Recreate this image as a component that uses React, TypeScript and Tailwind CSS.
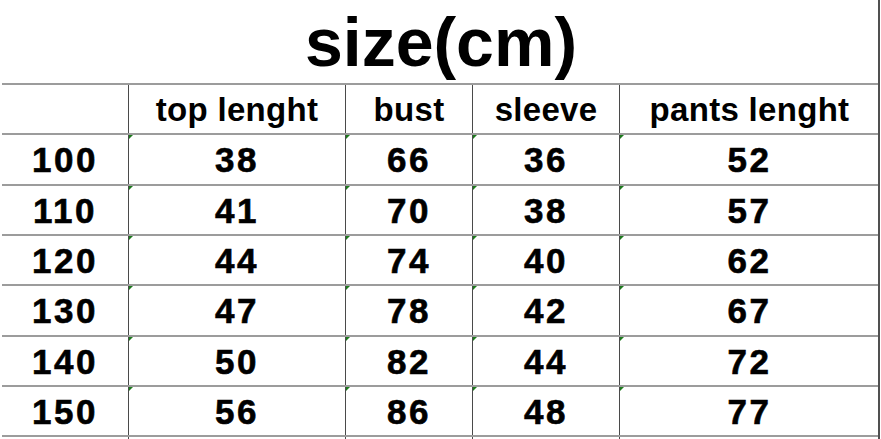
const headers = ["", "top lenght", "bust", "sleeve", "pants lenght"];

const rows = [
  ["100", "38", "66", "36", "52"],
  ["110", "41", "70", "38", "57"],
  ["120", "44", "74", "40", "62"],
  ["130", "47", "78", "42", "67"],
  ["140", "50", "82", "44", "72"],
  ["150", "56", "86", "48", "77"],
];

// row heights include the 2px top rule
const rowHeights = ["h-[51px]", "h-[50px]", "h-[50px]", "h-[51px]", "h-[50px]", "h-[50px]"];

const colWidths = ["w-[126px]", "w-[217px]", "w-[127px]", "w-[147px]", "w-[260px]"];

function Cell({
  index,
  children,
  marker,
  head,
}: {
  index: number;
  children?: React.ReactNode;
  marker?: boolean;
  head?: boolean;
}) {
  return (
    <div
      className={`relative flex h-full shrink-0 items-center justify-center ${colWidths[index]} ${
        index > 0 ? "border-l border-[#4a4a4a]" : ""
      } ${
        head
          ? "text-[33px] tracking-[0.3px]"
          : "text-[35px] tracking-[2.5px] [-webkit-text-stroke:0.6px_black]"
      }`}
    >
      {marker && index > 0 && (
        <span className="absolute left-0 top-0 h-0 w-0 border-r-[4px] border-t-[4px] border-r-transparent border-t-[#1d7a1d]" />
      )}
      <span className="leading-none">{children}</span>
    </div>
  );
}

export default function App() {
  return (
    <div className="h-[439px] w-[881px] overflow-hidden bg-white font-['Liberation_Sans',Arial,sans-serif] font-bold text-black">
      <div className="w-[880px] border-r-2 border-[#505050]">
        <div className="flex h-[83px] items-end justify-center pb-[1px]">
          <h1 className="pl-[4px] text-[68px] leading-[80px] tracking-[0px]">size(cm)</h1>
        </div>

        <div className="pl-[2px]">
          <div className="flex h-[50px] border-t-2 border-[#9c9c9c]">
            {headers.map((h, i) => (
              <Cell key={i} index={i} head>
                {h}
              </Cell>
            ))}
          </div>
          {rows.map((row, r) => (
            <div key={row[0]} className={`flex border-t-2 border-[#9c9c9c] ${rowHeights[r]}`}>
              {row.map((v, i) => (
                <Cell key={i} index={i} marker>
                  {v}
                </Cell>
              ))}
            </div>
          ))}
          <div className="flex h-[4px] border-t-2 border-[#9c9c9c]">
            {headers.map((_, i) => (
              <Cell key={i} index={i} />
            ))}
          </div>
        </div>
      </div>
    </div>
  );
}
